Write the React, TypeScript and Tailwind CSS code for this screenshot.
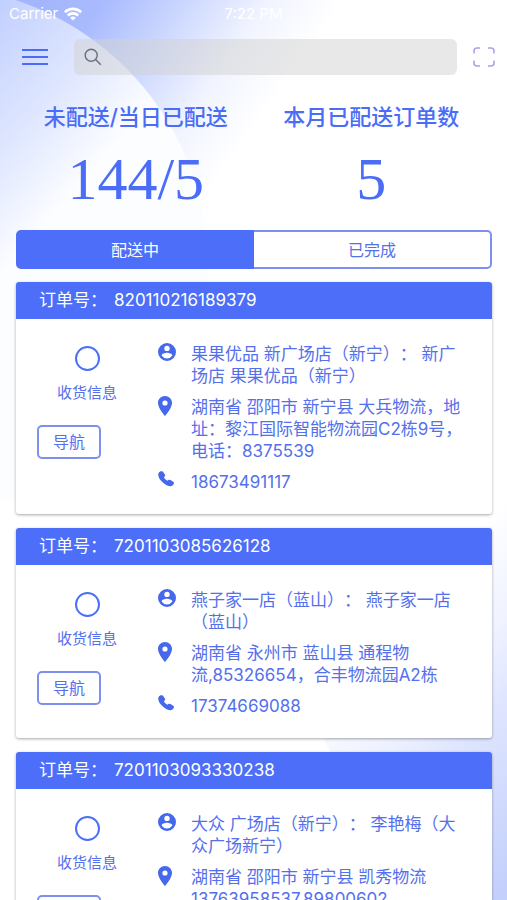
import { clsx } from 'clsx'

const ORDERS = [
  {
    id: '820110216189379',
    name: '果果优品 新广场店（新宁）： 新广场店 果果优品（新宁）',
    address: '湖南省 邵阳市 新宁县 大兵物流，地址：黎江国际智能物流园C2栋9号，电话：8375539',
    phone: '18673491117',
  },
  {
    id: '7201103085626128',
    name: '燕子家一店（蓝山）： 燕子家一店（蓝山）',
    address: '湖南省 永州市 蓝山县 通程物流,85326654，合丰物流园A2栋',
    phone: '17374669088',
  },
  {
    id: '7201103093330238',
    name: '大众 广场店（新宁）： 李艳梅（大众广场新宁）',
    address: '湖南省 邵阳市 新宁县 凯秀物流13763958537,89800602',
    phone: '13763958537',
  },
]

const TABS = ['配送中', '已完成']

function Backdrop() {
  return (
    <svg className="absolute inset-0 h-full w-full" viewBox="0 0 507 900" preserveAspectRatio="none" aria-hidden="true">
      <defs>
        <linearGradient id="sky" gradientUnits="userSpaceOnUse" x1="60" y1="-20" x2="260" y2="120">
          <stop offset="0" stopColor="#a3b6fc" />
          <stop offset="0.2" stopColor="#a9bbfd" />
          <stop offset="0.5" stopColor="#cfdafe" />
          <stop offset="0.75" stopColor="#f1f4ff" />
          <stop offset="1" stopColor="#ffffff" />
        </linearGradient>
        <linearGradient id="disc" gradientUnits="userSpaceOnUse" x1="-40" y1="20" x2="110" y2="150">
          <stop offset="0" stopColor="#bccbfe" />
          <stop offset="0.6" stopColor="#dfe7ff" />
          <stop offset="1" stopColor="#fcfdff" />
        </linearGradient>
        <linearGradient id="corner" gradientUnits="userSpaceOnUse" x1="407" y1="600" x2="607" y2="800">
          <stop offset="0" stopColor="#ffffff" />
          <stop offset="0.28" stopColor="#f0f3ff" />
          <stop offset="0.5" stopColor="#dfe5ff" />
          <stop offset="1" stopColor="#c2cffb" />
        </linearGradient>
      </defs>
      <rect width="507" height="500" fill="url(#sky)" />
      <circle cx="-72" cy="266" r="280" fill="url(#disc)" />
      <rect y="500" width="507" height="400" fill="url(#corner)" />
      <circle cx="47" cy="890" r="315" fill="#ffffff" />
    </svg>
  )
}

function PersonIcon() {
  return (
    <svg viewBox="2 2 20 20" className="size-[18px]" fill="currentColor" aria-hidden="true">
      <path d="M12 2a10 10 0 1 0 0 20 10 10 0 0 0 0-20zm0 3a3 3 0 1 1 0 6 3 3 0 0 1 0-6zm0 14.2a7.2 7.2 0 0 1-6-3.22c.03-1.99 4-3.08 6-3.08s5.97 1.09 6 3.08a7.2 7.2 0 0 1-6 3.22z" />
    </svg>
  )
}

function PinIcon() {
  return (
    <svg viewBox="5 2 14 20" className="h-5 w-3.5" fill="currentColor" aria-hidden="true">
      <path d="M12 2C8.13 2 5 5.13 5 9c0 5.25 7 13 7 13s7-7.75 7-13c0-3.87-3.13-7-7-7zm0 9.6a2.6 2.6 0 1 1 0-5.2 2.6 2.6 0 0 1 0 5.2z" />
    </svg>
  )
}

function PhoneIcon() {
  return (
    <svg viewBox="0 0 16 16" className="size-4" fill="currentColor" aria-hidden="true">
      <path d="M.6 2C1.4.5 3.6-.3 5 .8L6.9 3.6c.6 1.3.1 2.1-1 2.7.7 1.4 1.9 2.6 3.5 3.5.9-1 1.8-1.3 3-.8l2.9 1.7c1.3 1 .5 3-1 3.9-1.7 1.1-5 .8-8.6-2.3C2 9.2-.8 4.8.6 2z" />
    </svg>
  )
}

function StatusBar() {
  return (
    <div className="grid h-7 grid-cols-3 items-center px-[9px] text-[15px] text-white">
      <span className="flex items-center gap-1.5">
        Carrier
        <svg viewBox="0 0 18 14" className="h-3.5 w-[18px]" fill="none" stroke="currentColor" strokeWidth="2.6" aria-hidden="true">
          <path d="M.8 5.2a11.8 11.8 0 0 1 16.4 0" />
          <path d="M3.8 8.5a7.5 7.5 0 0 1 10.4 0" />
          <path d="M9 13.6 6.2 10.8a4 4 0 0 1 5.6 0z" fill="currentColor" stroke="none" />
        </svg>
      </span>
      <span className="text-center">7:22 PM</span>
    </div>
  )
}

function SearchBar() {
  return (
    <header className="flex items-center pt-[11px] pr-3 pl-[22px]">
      <button aria-label="菜单" className="shrink-0">
        <svg viewBox="0 0 26 16" className="h-4 w-[26px]" fill="none" stroke="#4a6cf7" strokeWidth="2">
          <path d="M0 1h26M0 8h26M0 15h26" />
        </svg>
      </button>
      <label className="ml-[26px] flex h-9 flex-1 items-center rounded-md bg-[#d2d2d2]/50 px-2.5">
        <svg viewBox="0 0 18 18" className="size-[18px] shrink-0" fill="none" stroke="#6b6e7c" strokeWidth="1.4">
          <circle cx="7.2" cy="7.2" r="6" />
          <path d="m11.6 11.6 5.2 5.2" />
        </svg>
        <input type="search" aria-label="搜索" className="ml-2 w-full min-w-0 bg-transparent text-base outline-none" />
      </label>
      <button aria-label="扫一扫" className="ml-4 shrink-0">
        <svg viewBox="0 0 22 20" className="h-5 w-[22px]" fill="none" stroke="#a9a3e6" strokeWidth="1.6">
          <path d="M1 6.5V4a3 3 0 0 1 3-3h3M15 1h3a3 3 0 0 1 3 3v2.5M21 13.5V16a3 3 0 0 1-3 3h-3M7 19H4a3 3 0 0 1-3-3v-2.5" />
        </svg>
      </button>
    </header>
  )
}

function Stat({ label, value }: { label: string; value: string }) {
  return (
    <div className="flex flex-col items-center">
      <h2 className="text-[22px] leading-8 font-medium">{label}</h2>
      <p className="mt-2 font-['Liberation_Serif','Noto_Sans_CJK_SC',serif] text-[60px] leading-[76px]">{value}</p>
    </div>
  )
}

function OrderCard({ order }: { order: (typeof ORDERS)[number] }) {
  const rows = [
    { icon: PersonIcon, text: order.name },
    { icon: PinIcon, text: order.address },
    { icon: PhoneIcon, text: order.phone },
  ]

  return (
    <article className="overflow-hidden rounded-[3px] bg-white shadow-[0_1px_3px_rgba(0,0,0,0.35)]">
      <h3 className="bg-[#4c6ef8] px-[23px] text-[17px] leading-[37px] text-white">
        订单号：<span className="ml-[7px]">{order.id}</span>
      </h3>
      <div className="flex pt-6 pr-[22px] pb-[21px]">
        <div className="flex w-[142px] shrink-0 flex-col">
          <label className="flex flex-col items-center text-[15px] leading-5">
            <input
              type="radio"
              name="order"
              className="mt-[3px] mb-3 size-[25px] appearance-none rounded-full border-2 border-[#4c6ef8] checked:bg-[#4c6ef8]"
            />
            收货信息
          </label>
          <button className="mt-[22px] ml-[21px] h-[34px] w-16 rounded-[5px] border-2 border-[#7d90f0] text-base">导航</button>
        </div>
        <ul className="flex flex-1 flex-col gap-[9px]">
          {rows.map(({ icon: Icon, text }) => (
            <li key={text} className="flex text-[17px] leading-[22px]">
              <span className="w-[33px] shrink-0 text-[#4668ec]">
                <Icon />
              </span>
              <span>{text}</span>
            </li>
          ))}
        </ul>
      </div>
    </article>
  )
}

export default function App() {
  return (
    <div className="relative h-screen overflow-hidden bg-white font-['Inter','Noto_Sans_CJK_SC',sans-serif] text-[#5470ec] [text-spacing-trim:space-all]">
      <Backdrop />
      <div className="relative h-full overflow-y-auto [scrollbar-width:none]">
        <StatusBar />
        <SearchBar />
        <section className="grid grid-cols-2 px-[18px] pt-[26px] text-[#4a6cf7]">
          <Stat label="未配送/当日已配送" value="144/5" />
          <Stat label="本月已配送订单数" value="5" />
        </section>
        <main className="pt-[13px] pr-[15px] pb-4 pl-4">
          <div className="grid h-[39px] grid-cols-2 text-base">
            {TABS.map((tab, i) => (
              <button
                key={tab}
                className={clsx(
                  'border-2',
                  i === 0 ? 'rounded-l-[5px] border-[#4c6ef8] bg-[#4c6ef8] text-white' : 'rounded-r-[5px] border-l-0 border-[#7d90f0] bg-white',
                )}
              >
                {tab}
              </button>
            ))}
          </div>
          <div className="mt-[13px] flex flex-col gap-3.5">
            {ORDERS.map((order) => (
              <OrderCard key={order.id} order={order} />
            ))}
          </div>
        </main>
      </div>
    </div>
  )
}
